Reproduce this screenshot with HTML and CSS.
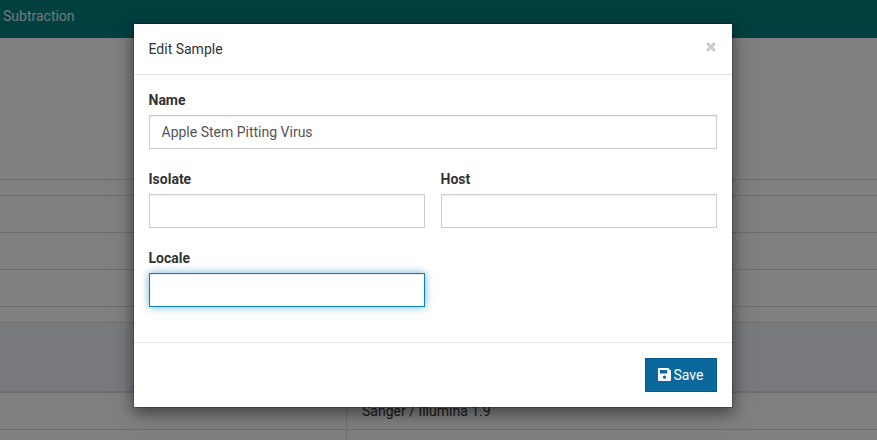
FILE: index.html
```html
<!DOCTYPE html>
<html lang="en">
<head>
<meta charset="utf-8">
<title>Edit Sample</title>
<link rel="stylesheet" href="styles.css">
</head>
<body>
<div class="page">
  <nav class="navbar"><a class="nav-link">Subtraction</a></nav>
  <main class="content">
    <div class="table">
      <div class="row"></div>
      <div class="row"></div>
      <div class="row"></div>
    </div>
    <div class="section-head"></div>
    <div class="detail-row"><div class="cell-key"></div><div class="cell-value">Sanger / Illumina 1.9</div></div>
    <div class="detail-row"><div class="cell-key"></div><div class="cell-value"></div></div>
  </main>
</div>
<div class="backdrop">
  <form class="modal">
    <header class="modal-header">
      <span class="title">Edit Sample</span>
      <button type="button" class="close" aria-label="Close"><svg width="10" height="10" viewBox="0 0 10 10"><path d="M1.1 1.1 8.9 8.9M8.9 1.1 1.1 8.9" fill="none" stroke="currentColor" stroke-width="2.9"/></svg></button>
    </header>
    <div class="modal-body">
      <div class="field wide"><label for="name">Name</label><input id="name" type="text" value="Apple Stem Pitting Virus"></div>
      <div class="field"><label for="isolate">Isolate</label><input id="isolate" type="text"></div>
      <div class="field"><label for="host">Host</label><input id="host" type="text"></div>
      <div class="field"><label for="locale">Locale</label><input id="locale" class="active" type="text"></div>
    </div>
    <footer class="modal-footer">
      <button type="button" class="save"><svg width="13" height="13" viewBox="0 0 13 13"><path fill="currentColor" fill-rule="evenodd" d="M1 0H10.2L13 2.8V12Q13 13 12 13H1Q0 13 0 12V1Q0 0 1 0ZM2 2V5.5H9.2V2ZM6.5 7.6A1.6 1.6 0 1 0 6.5 10.8A1.6 1.6 0 1 0 6.5 7.6Z"/></svg><span>Save</span></button>
    </footer>
  </form>
</div>
</body>
</html>
```
FILE: styles.css
```css
* { box-sizing: border-box; }
body {
  margin: 0;
  height: 440px;
  overflow: hidden;
  background: #fff;
  color: #333;
  font: 14px/20px Roboto, sans-serif;
}
.page { height: 440px; overflow: hidden; }
.navbar { height: 38px; padding: 6px 3px; background: #048080; }
.nav-link { color: #fff; opacity: .9; }
.content { padding-top: 141px; }
.table {
  padding-top: 15px;
  height: 144px;
  border-top: 1px solid #ddd;
  border-bottom: 1px solid #ddd;
}
.row { height: 37px; border-top: 1px solid #ddd; }
.row:last-child { height: 38px; border-bottom: 1px solid #ddd; }
.section-head { height: 70px; background: #f0f3fb; border-bottom: 2px solid #ddd; }
.detail-row { display: flex; height: 37px; border-bottom: 1px solid #ddd; }
.cell-key { width: 347px; border-right: 1px solid #ddd; }
.cell-value { padding: 8px 15px; }

.backdrop {
  position: absolute;
  inset: 0;
  padding: 23px 0 0 132.5px;
  background: rgba(0, 0, 0, .5);
}
.modal {
  width: 600px;
  height: 385px;
  border: 1px solid rgba(0, 0, 0, .2);
  background: #fff;
  background-clip: padding-box;
  box-shadow: 0 5px 15px rgba(0, 0, 0, .5);
}
.modal-header {
  display: flex;
  justify-content: space-between;
  height: 51px;
  padding: 15px;
  border-bottom: 1px solid #e5e5e5;
}
.close {
  display: flex;
  width: 10px;
  height: 10px;
  margin: 3px 1px 0 0;
  padding: 0;
  border: 0;
  background: none;
  color: #ccc;
}
.modal-body {
  display: grid;
  grid-template-columns: 276px 276px;
  grid-auto-rows: 64px;
  gap: 15px 16px;
  height: 267px;
  padding: 15px;
}
.wide { grid-column: 1 / 3; }
label { display: block; margin-bottom: 5px; font-weight: 700; }
input {
  display: block;
  width: 100%;
  height: 34px;
  padding: 6px 12px;
  border: 1px solid #ccc;
  border-radius: 0;
  outline: 0;
  background: #fff;
  box-shadow: inset 0 1px 1px rgba(0, 0, 0, .075);
  color: #555;
  font: inherit;
}
.active {
  border-color: #0b7fbd;
  box-shadow: inset 0 1px 1px rgba(0, 0, 0, .075), 0 0 8px rgba(11, 127, 189, .6);
}
.modal-footer {
  display: flex;
  justify-content: flex-end;
  height: 65px;
  padding: 15px;
  border-top: 1px solid #e5e5e5;
}
.save {
  display: flex;
  align-items: center;
  gap: 3px;
  width: 72px;
  height: 34px;
  padding: 0 12px;
  border: 1px solid #08578a;
  background: #0b689d;
  color: #fff;
  font: inherit;
}
.save svg { margin-bottom: 1px; }
```
